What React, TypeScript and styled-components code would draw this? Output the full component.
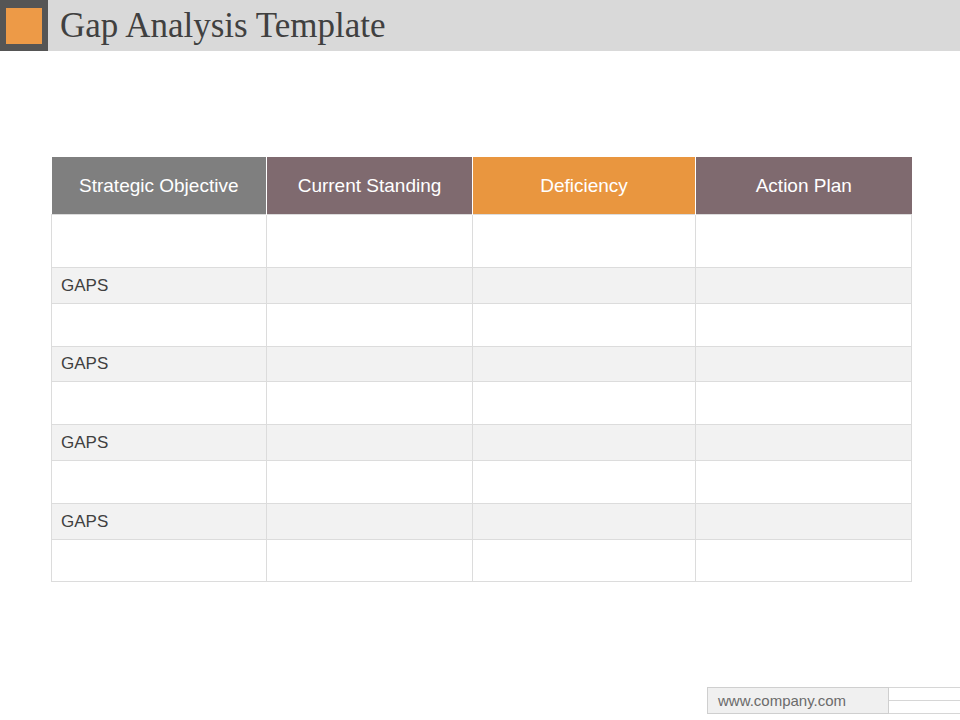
import React from "react";
import styled, { createGlobalStyle } from "styled-components";

const Global = createGlobalStyle`
  html, body { margin: 0; padding: 0; background: #fff; }
  body { font-family: "Liberation Sans", Arial, sans-serif; }
`;

const Page = styled.div`
  width: 960px;
  height: 720px;
  display: flex;
  flex-direction: column;
  overflow: hidden;
`;

const TitleBar = styled.div`
  display: flex;
  align-items: center;
  height: 51px;
  background: #d9d9d9;
`;

const Badge = styled.div`
  width: 48px;
  height: 51px;
  background: #555555;
  display: flex;
  align-items: center;
  justify-content: center;
`;

const Square = styled.div`
  width: 36px;
  height: 36px;
  background: #ed9a47;
`;

const Title = styled.h1`
  margin: 0 0 0 12px;
  font-family: "Liberation Serif", "DejaVu Serif", serif;
  font-weight: normal;
  font-size: 35px;
  color: #404040;
  line-height: 1;
`;

const Table = styled.table`
  margin: 106px 0 0 51px;
  width: 860px;
  border-collapse: collapse;
  table-layout: fixed;
`;

const Th = styled.th<{ $bg: string }>`
  background: ${(p) => p.$bg};
  color: #fff;
  font-weight: normal;
  font-size: 19px;
  height: 57px;
  padding: 0;
  text-align: center;
  border-left: 1px solid #fff;
  &:first-child { border-left: none; }
`;

const Tr = styled.tr<{ $alt: boolean; $h: number }>`
  background: ${(p) => (p.$alt ? "#f2f2f2" : "#fff")};
  height: ${(p) => p.$h}px;
`;

const Td = styled.td`
  border: 1px solid #dcdcdc;
  padding: 0 0 0 9px;
  font-size: 17px;
  color: #404040;
`;

const Footer = styled.div`
  margin-top: auto;
  margin-bottom: 6px;
  display: flex;
  align-items: stretch;
  padding-left: 707px;
`;

const UrlBox = styled.div`
  width: 170px;
  height: 25px;
  background: #f0f0f0;
  border: 1px solid #cfcfcf;
  color: #6b6b6b;
  font-size: 15px;
  padding-left: 10px;
  display: flex;
  align-items: center;
`;

const Lines = styled.div`
  flex: 1;
  border-top: 1px solid #d6d6d6;
  border-bottom: 1px solid #d6d6d6;
  display: flex;
  flex-direction: column;
  justify-content: center;
`;

const MidLine = styled.div`
  height: 1px;
  background: #d6d6d6;
`;

const heads = [
  ["Strategic Objective", "#7f7f7f"],
  ["Current Standing", "#7f6a6f"],
  ["Deficiency", "#e9963f"],
  ["Action Plan", "#7f6a6f"],
];

const rows = [
  { t: "", h: 53 },
  { t: "GAPS", h: 36 },
  { t: "", h: 43 },
  { t: "GAPS", h: 35 },
  { t: "", h: 43 },
  { t: "GAPS", h: 36 },
  { t: "", h: 43 },
  { t: "GAPS", h: 36 },
  { t: "", h: 42 },
];

export default function App() {
  return (
    <Page>
      <Global />
      <TitleBar>
        <Badge><Square /></Badge>
        <Title>Gap Analysis Template</Title>
      </TitleBar>
      <Table>
        <colgroup>
          <col style={{ width: 215 }} />
          <col style={{ width: 206 }} />
          <col style={{ width: 223 }} />
          <col style={{ width: 216 }} />
        </colgroup>
        <thead>
          <tr>
            {heads.map(([t, c]) => (
              <Th key={t} $bg={c}>{t}</Th>
            ))}
          </tr>
        </thead>
        <tbody>
          {rows.map((r, i) => (
            <Tr key={i} $alt={r.t !== ""} $h={r.h}>
              <Td>{r.t}</Td>
              <Td />
              <Td />
              <Td />
            </Tr>
          ))}
        </tbody>
      </Table>
      <Footer>
        <UrlBox>www.company.com</UrlBox>
        <Lines><MidLine /></Lines>
      </Footer>
    </Page>
  );
}
